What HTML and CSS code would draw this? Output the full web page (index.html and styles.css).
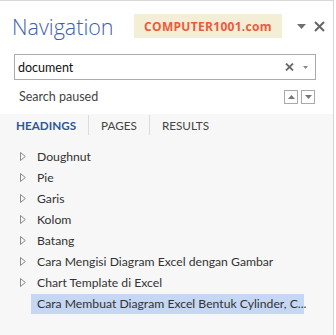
FILE: index.html
```html
<!DOCTYPE html>
<html>
<head>
<meta charset="utf-8">
<link rel="stylesheet" href="styles.css">
</head>
<body>
<div class="panel">
  <div class="top">
    <div class="header">
      <div class="title">Navigation</div>
      <div class="badge">COMPUTER1001.com</div>
      <div class="hdr-icons">
        <svg class="caret" width="9" height="5" viewBox="0 0 9 5"><path d="M0 0H9L4.5 5Z" fill="#707070"/></svg>
        <svg class="close" width="11" height="11" viewBox="0 0 11 11"><path d="M1 1L10 10M10 1L1 10" stroke="#666" stroke-width="2"/></svg>
      </div>
    </div>
    <div class="search">
      <span class="query">document</span>
      <svg class="clear" width="9" height="8" viewBox="0 0 9 8"><path d="M1 0.5L8 7.5M8 0.5L1 7.5" stroke="#6b6b6b" stroke-width="1.8"/></svg>
      <svg class="sdrop" width="5" height="3" viewBox="0 0 5 3"><path d="M0 0H5L2.5 3Z" fill="#888"/></svg>
    </div>
    <div class="status">
      <span class="paused">Search paused</span>
      <div class="navbtns">
        <span class="nb"><svg width="7" height="4" viewBox="0 0 7 4"><path d="M0 4H7L3.5 0Z" fill="#777"/></svg></span>
        <span class="nb"><svg width="7" height="4" viewBox="0 0 7 4"><path d="M0 0H7L3.5 4Z" fill="#777"/></svg></span>
      </div>
    </div>
  </div>
  <div class="body">
    <div class="tabs">
      <span class="tab active">HEADINGS</span>
      <span class="sep"></span>
      <span class="tab">PAGES</span>
      <span class="sep"></span>
      <span class="tab">RESULTS</span>
    </div>
    <ul class="tree">
      <li class="row"><svg class="tri" width="6" height="9" viewBox="0 0 6 9"><path d="M0.5 0.5L5.3 4.5L0.5 8.5Z" fill="none" stroke="#8a8a8a"/></svg><span>Doughnut</span></li>
      <li class="row"><svg class="tri" width="6" height="9" viewBox="0 0 6 9"><path d="M0.5 0.5L5.3 4.5L0.5 8.5Z" fill="none" stroke="#8a8a8a"/></svg><span>Pie</span></li>
      <li class="row"><svg class="tri" width="6" height="9" viewBox="0 0 6 9"><path d="M0.5 0.5L5.3 4.5L0.5 8.5Z" fill="none" stroke="#8a8a8a"/></svg><span>Garis</span></li>
      <li class="row"><svg class="tri" width="6" height="9" viewBox="0 0 6 9"><path d="M0.5 0.5L5.3 4.5L0.5 8.5Z" fill="none" stroke="#8a8a8a"/></svg><span>Kolom</span></li>
      <li class="row"><svg class="tri" width="6" height="9" viewBox="0 0 6 9"><path d="M0.5 0.5L5.3 4.5L0.5 8.5Z" fill="none" stroke="#8a8a8a"/></svg><span>Batang</span></li>
      <li class="row"><svg class="tri" width="6" height="9" viewBox="0 0 6 9"><path d="M0.5 0.5L5.3 4.5L0.5 8.5Z" fill="none" stroke="#8a8a8a"/></svg><span>Cara Mengisi Diagram Excel dengan Gambar</span></li>
      <li class="row"><svg class="tri" width="6" height="9" viewBox="0 0 6 9"><path d="M0.5 0.5L5.3 4.5L0.5 8.5Z" fill="none" stroke="#8a8a8a"/></svg><span>Chart Template di Excel</span></li>
      <li class="row leaf"><span class="sel">Cara Membuat Diagram Excel Bentuk Cylinder, C...</span></li>
    </ul>
  </div>
</div>
</body>
</html>
```
FILE: styles.css
```css
html, body {
  margin: 0;
  padding: 0;
  background: #ffffff;
}
body {
  width: 336px;
  height: 335px;
  overflow: hidden;
  font-family: Lato, "Noto Sans", sans-serif;
}
.panel {
  width: 333px;
  height: 334px;
  border-top: 1px solid #d8d8d8;
  border-right: 1px solid #d6d6d6;
  display: flex;
  flex-direction: column;
}
.top {
  height: 113px;
  background: #ffffff;
  display: flex;
  flex-direction: column;
}
.header {
  height: 50px;
  display: flex;
  align-items: center;
  padding-left: 12px;
}
.title {
  font-family: "Open Sans", sans-serif;
  font-weight: 300;
  font-size: 21.5px;
  color: #3a62b0;
  width: 122px;
}
.badge {
  width: 148px;
  height: 24px;
  background: #f3efd6;
  color: #ef5a3c;
  font-family: "Open Sans", sans-serif;
  font-weight: 700;
  font-size: 12px;
  display: flex;
  align-items: center;
  justify-content: center;
  letter-spacing: 0.3px;
}
.hdr-icons {
  display: flex;
  align-items: center;
  margin-left: 15px;
  gap: 8px;
}
.caret { margin-top: 1px; }
.search {
  margin: 3px 0 0 14px;
  width: 300px;
  height: 24px;
  border: 1px solid #ababab;
  display: flex;
  align-items: center;
}
.query {
  flex: 1;
  padding-left: 3px;
  font-size: 12.5px;
  color: #111;
}
.clear { margin-right: 9px; }
.sdrop { margin-right: 7px; }
.status {
  margin-top: 9px;
  height: 15px;
  display: flex;
  align-items: center;
  padding-left: 19px;
}
.paused {
  flex: 1;
  font-size: 12.5px;
  color: #444;
}
.navbtns {
  display: flex;
  gap: 3px;
  margin-right: 18px;
}
.nb {
  width: 12px;
  height: 12px;
  border: 1px solid #a9a9a9;
  display: flex;
  align-items: center;
  justify-content: center;
}
.body {
  flex: 1;
  background: #f7f7f7;
}
.tabs {
  height: 22px;
  display: flex;
  align-items: center;
  padding-left: 16px;
}
.tab {
  font-size: 11.7px;
  color: #444;
}
.tab.active {
  color: #2b579a;
  font-weight: 700;
}
.sep {
  width: 1px;
  height: 20px;
  background: #dcdcdc;
  margin: 0 12px;
}
.tree {
  list-style: none;
  margin: 10px 0 0 0;
  padding: 0;
}
.row {
  height: 21px;
  display: flex;
  align-items: center;
  padding-left: 20px;
  font-size: 12.2px;
  color: #333;
}
.tri { margin-right: 11px; }
.leaf { padding-left: 31px; }
.sel {
  background: #c5d7f2;
  width: 267px;
  height: 20px;
  line-height: 20px;
  padding-left: 6px;
  white-space: nowrap;
}
```
